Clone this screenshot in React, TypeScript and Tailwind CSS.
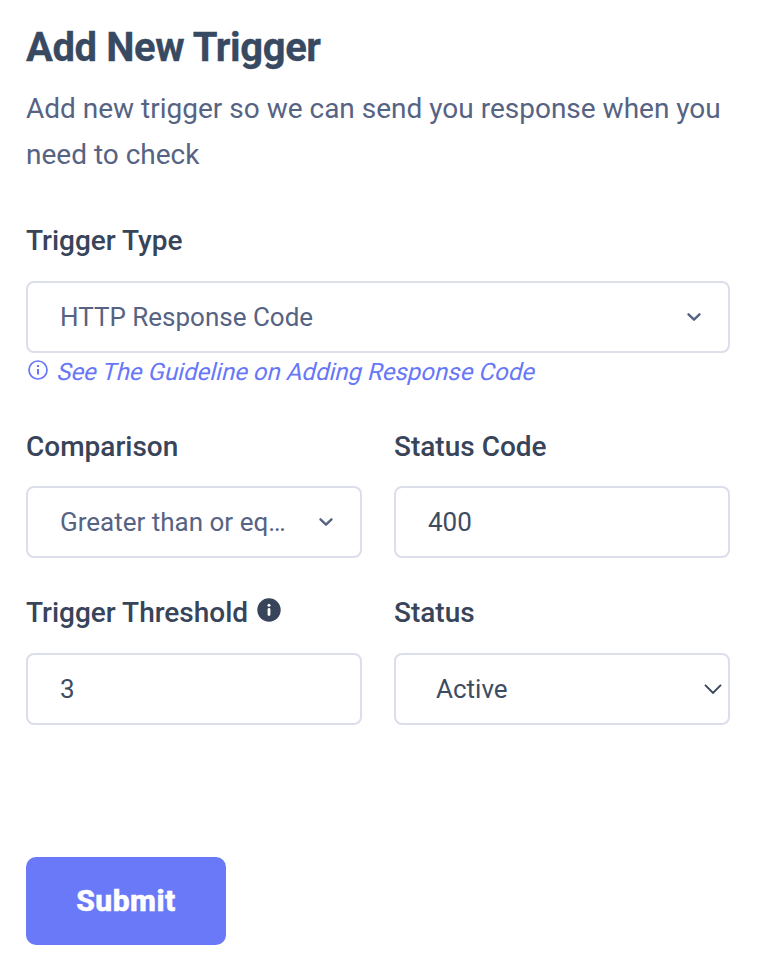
import React from "react";

function Label({ children }: { children: React.ReactNode }) {
  return <div className="flex h-8 items-center whitespace-nowrap text-[28px] font-medium text-[#384459]">{children}</div>;
}

function Field({ children, className = "" }: { children: React.ReactNode; className?: string }) {
  return (
    <div className={`flex h-[72px] items-center rounded-[8px] border-2 border-[#dcdeea] ${className}`}>
      {children}
    </div>
  );
}

function Chevron() {
  return (
    <svg width="16" height="12" viewBox="0 0 16 12" fill="none" stroke="#566383" strokeWidth="2.4" strokeLinecap="round" strokeLinejoin="round">
      <path d="M2.500 3.300 8 8.700l5.500-5.400" />
    </svg>
  );
}

export default function App() {
  return (
    <main className="h-[964px] w-[766px] overflow-hidden bg-white pl-[26px] pr-9 pt-[23px] font-[Roboto,sans-serif] text-[26px]">
      <h1 className="h-[50px] text-[40px] font-bold leading-[50px] tracking-[-0.4px] text-[#384a62] [-webkit-text-stroke:0.3px_#384a62]">Add New Trigger</h1>
      <p className="mt-[13px] text-[28px] leading-[46px] text-[#566383]">
        Add new trigger so we can send you response when you<br />need to check
      </p>
      <div className="mt-[47px]">
        <Label>Trigger Type</Label>
        <Field className="mt-6 justify-between pl-8 pr-[26px] text-[#566383]">
          <span>HTTP Response Code</span>
          <Chevron />
        </Field>
        <a className="flex h-9 items-center whitespace-nowrap pl-0.5 text-2xl text-[#6777f8]">
          <svg className="mb-[2px] mr-2" width="20" height="20" viewBox="0 0 20 20" fill="none" stroke="#6777f8" strokeWidth="1.7">
            <circle cx="10" cy="10" r="9" />
            <path d="M10 9v5.500M10 5v2" strokeWidth="2" />
          </svg>
          <span className="inline-block origin-[0_75%] -skew-x-[14deg] pt-[2px]">See The Guideline on Adding Response Code</span>
        </a>
      </div>
      <div className="mt-[42px] grid grid-cols-2 gap-x-8">
        <div>
          <Label>Comparison</Label>
          <Field className="mt-[23px] justify-between pl-8 pr-[26px] text-[#566383]">
            <span>Greater than or eq…</span>
            <Chevron />
          </Field>
        </div>
        <div>
          <Label>Status Code</Label>
          <Field className="mt-[23px] pl-8 text-[#3d4c62]">400</Field>
        </div>
        <div className="mt-[39px]">
          <Label>
            Trigger Threshold
            <svg className="mb-[6px] ml-[9px]" width="24" height="24" viewBox="0 0 24 24">
              <circle cx="12" cy="12" r="11.700" fill="#384459" />
              <circle cx="12" cy="7.300" r="1.500" fill="white" />
              <path d="M12 11.500v5" fill="none" stroke="white" strokeWidth="2.800" strokeLinecap="round" />
            </svg>
          </Label>
          <Field className="mt-6 pl-8 text-[#3d4c62]">3</Field>
        </div>
        <div className="mt-[39px]">
          <Label>Status</Label>
          <Field className="mt-6 justify-between pl-10 pr-1.5 text-[#3d4c62]">
            <span>Active</span>
            <svg width="18" height="12" viewBox="0 0 18 12" fill="none" stroke="#384459" strokeWidth="1.900">
              <path d="m1 1.800 8 8 8-8" />
            </svg>
          </Field>
        </div>
      </div>
      <button className="mt-[132px] h-[88px] w-[200px] rounded-[10px] bg-[#6979f8] pb-[2px] text-[30px] font-extrabold tracking-[0.5px] text-white [-webkit-text-stroke:0.5px_white]">Submit</button>
    </main>
  );
}
